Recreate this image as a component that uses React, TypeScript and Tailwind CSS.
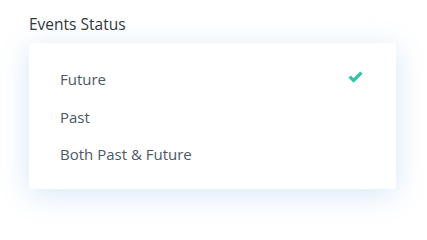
import React from 'react';

const options = [
  { id: 'future', label: 'Future', checked: true },
  { id: 'past', label: 'Past', checked: false },
  { id: 'both', label: 'Both Past & Future', checked: false },
];

const Check = () => (
  <svg width="15" height="12" viewBox="0 0 15 12" fill="none">
    <path d="M1.6 5.6 L5.6 9.4 L13.4 1.6" stroke="#2ec4a5" strokeWidth={3.2} strokeLinejoin="miter" />
  </svg>
);

export default function App() {
  return (
    <div className="min-h-screen bg-white pl-[29px] pt-[14px] font-['Open_Sans',sans-serif]">
      <div className="text-[15.5px] leading-5 text-[#32373c]">Events Status</div>
      <div className="mt-[9px] w-[367px] rounded-[3px] bg-white pb-[25px] pl-[31px] pr-[33px] pt-[26px] shadow-[0_5px_30px_rgba(43,135,218,0.2)]">
        <ul className="flex flex-col gap-[17.5px]">
          {options.map((o) => (
            <li key={o.id} className="flex items-center justify-between text-[15px] leading-5 text-[#4c5866]">
              <span>{o.label}</span>
              {o.checked && (
                <span className="-mt-[4px]">
                  <Check />
                </span>
              )}
            </li>
          ))}
        </ul>
      </div>
    </div>
  );
}
